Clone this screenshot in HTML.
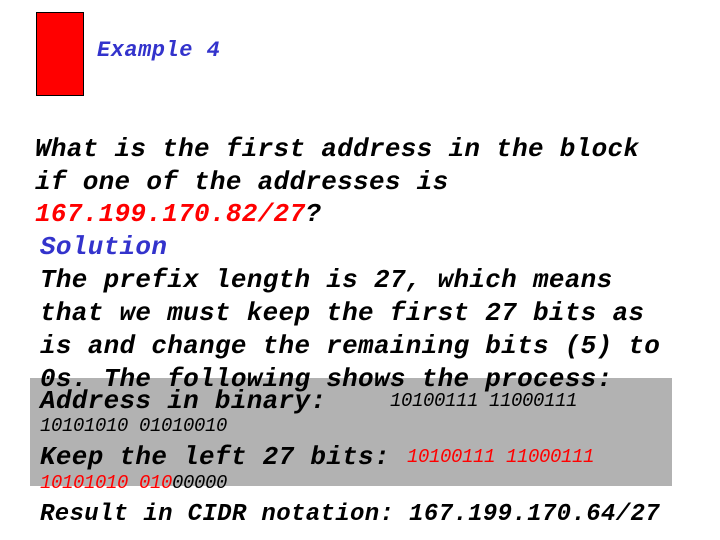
<!DOCTYPE html>
<html><head><style>
body{margin:0;width:720px;height:540px;background:#fff;position:relative;overflow:hidden;font-family:"Liberation Mono",monospace;font-style:italic;font-weight:bold;}
.t{position:absolute;white-space:pre;font-size:26px;line-height:26px;letter-spacing:0.3px;color:#000;}
.s{position:absolute;white-space:pre;font-size:19px;line-height:19px;letter-spacing:-0.4px;font-weight:normal;color:#000;}
.r{color:#f00}
.b{color:#3333cc}
</style></head><body>
<div style="position:absolute;left:36px;top:12px;width:46px;height:82px;background:#f00;border:1px solid #000"></div>
<div class="t b" style="left:97px;top:40px;font-size:22px;line-height:22px;letter-spacing:0.5px">Example 4</div>
<div style="position:absolute;left:30px;top:378px;width:642px;height:108px;background:#b2b2b2"></div>
<div class="t" style="left:35px;top:136px">What is the first address in the block</div>
<div class="t" style="left:35px;top:169px">if one of the addresses is</div>
<div class="t" style="left:35px;top:201px"><span class="r">167.199.170.82/27</span>?</div>
<div class="t b" style="left:40px;top:234px">Solution</div>
<div class="t" style="left:40px;top:267px">The prefix length is 27, which means</div>
<div class="t" style="left:40px;top:300px">that we must keep the first 27 bits as</div>
<div class="t" style="left:40px;top:333px">is and change the remaining bits (5) to</div>
<div class="t" style="left:40px;top:366px">0s. The following shows the process:</div>
<div class="t" style="left:40px;top:388px">Address in binary:</div>
<div class="s" style="left:390px;top:392px">10100111 11000111</div>
<div class="s" style="left:40px;top:417px">10101010 01010010</div>
<div class="t" style="left:40px;top:444px">Keep the left 27 bits:</div>
<div class="s r" style="left:407px;top:448px">10100111 11000111</div>
<div class="s" style="left:40px;top:474px"><span class="r">10101010 010</span>00000</div>
<div class="t" style="left:40px;top:502px;font-size:24px;letter-spacing:0.36px">Result in CIDR notation: 167.199.170.64/27</div>
</body></html>
